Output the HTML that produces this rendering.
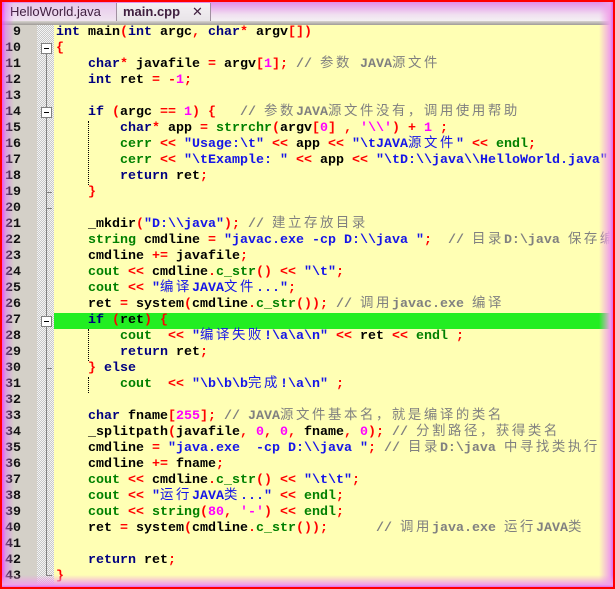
<!DOCTYPE html>
<html><head><meta charset="utf-8"><style>
*{margin:0;padding:0}
html,body{width:615px;height:589px;overflow:hidden;background:#ff0000}
#w{position:absolute;left:0;top:0;width:615px;height:589px;background:#ffffb4;overflow:hidden}
#tabs{position:absolute;left:0;top:0;width:615px;height:21px;background:linear-gradient(#e080e8,#f0e0f0 70%,#f4f0f4)}
#tabsep{position:absolute;left:0;top:21px;width:615px;height:4px;background:linear-gradient(#d8d4d0,#a09c98)}
.tab{position:absolute;top:3px;height:18px;font:13px "Liberation Sans",sans-serif;color:#402040;line-height:18px;border-right:1px solid #a090a0}
#gut{position:absolute;left:0;top:25px;width:37px;height:564px;background:#d4d0c8}
#chk{position:absolute;left:37px;top:25px;width:17px;height:564px;background-color:#f0f0f0;background-image:repeating-conic-gradient(#c8c8c8 0 25%,#f4f4f4 0 50%);background-size:2px 2px}
#lg{position:absolute;left:0;top:0;width:14px;height:589px;background:linear-gradient(90deg,#ff20ff,rgba(220,120,240,0.6) 40%,rgba(212,208,200,0))}
#rg{position:absolute;right:0;top:0;width:16px;height:589px;background:linear-gradient(90deg,rgba(255,255,180,0),#f0a0e8 70%,#d040f0)}
#bg{position:absolute;left:0;bottom:0;width:615px;height:14px;background:linear-gradient(rgba(255,255,180,0),#f0a0e8 70%,#d040f0)}
#hl{position:absolute;left:54px;top:313px;width:561px;height:16px;background:#22ee22}
.ln{position:absolute;left:0;width:21px;text-align:right;font:bold 13.33px "Liberation Mono",monospace;color:#101010;line-height:16px}
.l{position:absolute;left:56px;height:16px;white-space:pre;font:bold 13.33px "Liberation Mono",monospace;line-height:16px;color:#000}
.k{color:#000080}.o{color:#ff0000}.n{color:#ff00ff}.s{color:#1414e8}.c{color:#808080}.g{color:#008000}
i{font-style:normal;font-weight:normal;font-family:"WenQuanYi Zen Hei","Noto Sans CJK SC",sans-serif;letter-spacing:2.6px;font-size:13.4px;line-height:0}
.fb{position:absolute;left:41px;width:9px;height:9px;border:1px solid #808080;background:#fff}
.fb:after{content:"";position:absolute;left:2px;top:4px;width:5px;height:1px;background:#000}
.vl{position:absolute;left:46px;width:1px;background:#808080}
.tk{position:absolute;left:46px;width:6px;height:1px;background:#808080}
.dg{position:absolute;width:0;border-left:1px dotted #000}
#frame{position:absolute;left:0;top:0;width:611px;height:585px;border:2px solid #ff0000;pointer-events:none}
</style></head><body><div id="w">
<div id="tabs"></div>
<div class="tab" style="left:4px;width:107px;padding-left:6px;background:linear-gradient(#e8c8ec,#f0e4f0)">HelloWorld.java</div>
<div class="tab" style="left:116px;width:87px;padding-left:6px;background:linear-gradient(#f4f0f4,#e8e4e8);font-weight:bold;border-left:1px solid #a090a0">main.cpp<span style="position:absolute;left:75px;font-weight:normal">✕</span></div>
<div id="tabsep"></div>
<div id="gut"></div><div id="chk"></div>
<div id="hl"></div>
<div class="vl" style="top:50px;height:525px"></div>
<div class="fb" style="top:43px"></div>
<div class="fb" style="top:107px"></div>
<div class="fb" style="top:316px"></div>
<div class="tk" style="top:192px"></div>
<div class="tk" style="top:208px"></div>
<div class="tk" style="top:368px"></div>
<div class="tk" style="top:575px"></div>
<div class="dg" style="left:88px;top:121px;height:64px"></div>
<div class="dg" style="left:88px;top:329px;height:32px"></div>
<div class="dg" style="left:88px;top:377px;height:16px"></div>
<div class="ln" style="top:25px">9</div><div class="l" style="top:25px"><span class="k">int</span> main<span class="o">(</span><span class="k">int</span> argc<span class="o">,</span> <span class="k">char</span><span class="o">*</span> argv<span class="o">[])</span></div>
<div class="ln" style="top:41px">10</div><div class="l" style="top:41px"><span class="o">{</span></div>
<div class="ln" style="top:57px">11</div><div class="l" style="top:57px">    <span class="k">char</span><span class="o">*</span> javafile <span class="o">=</span> argv<span class="o">[</span><span class="n">1</span><span class="o">];</span> <span class="c">// <i>参数</i> JAVA<i>源文件</i></span></div>
<div class="ln" style="top:73px">12</div><div class="l" style="top:73px">    <span class="k">int</span> ret <span class="o">=</span> <span class="o">-</span><span class="n">1</span><span class="o">;</span></div>
<div class="ln" style="top:89px">13</div>
<div class="ln" style="top:105px">14</div><div class="l" style="top:105px">    <span class="k">if</span> <span class="o">(</span>argc <span class="o">==</span> <span class="n">1</span><span class="o">)</span> <span class="o">{</span>   <span class="c">// <i>参数</i>JAVA<i>源文件没有，调用使用帮助</i></span></div>
<div class="ln" style="top:121px">15</div><div class="l" style="top:121px">        <span class="k">char</span><span class="o">*</span> app <span class="o">=</span> <span class="g">strrchr</span><span class="o">(</span>argv<span class="o">[</span><span class="n">0</span><span class="o">]</span> <span class="o">,</span> <span class="n">'\\'</span><span class="o">)</span> <span class="o">+</span> <span class="n">1</span> <span class="o">;</span></div>
<div class="ln" style="top:137px">16</div><div class="l" style="top:137px">        <span class="g">cerr</span> <span class="o">&lt;&lt;</span> <span class="s">"Usage:\t"</span> <span class="o">&lt;&lt;</span> app <span class="o">&lt;&lt;</span> <span class="s">"\tJAVA<i>源文件</i>"</span> <span class="o">&lt;&lt;</span> <span class="g">endl</span><span class="o">;</span></div>
<div class="ln" style="top:153px">17</div><div class="l" style="top:153px">        <span class="g">cerr</span> <span class="o">&lt;&lt;</span> <span class="s">"\tExample: "</span> <span class="o">&lt;&lt;</span> app <span class="o">&lt;&lt;</span> <span class="s">"\tD:\\java\\HelloWorld.java"</span></div>
<div class="ln" style="top:169px">18</div><div class="l" style="top:169px">        <span class="k">return</span> ret<span class="o">;</span></div>
<div class="ln" style="top:185px">19</div><div class="l" style="top:185px">    <span class="o">}</span></div>
<div class="ln" style="top:201px">20</div>
<div class="ln" style="top:217px">21</div><div class="l" style="top:217px">    _mkdir<span class="o">(</span><span class="s">"D:\\java"</span><span class="o">);</span> <span class="c">// <i>建立存放目录</i></span></div>
<div class="ln" style="top:233px">22</div><div class="l" style="top:233px">    <span class="g">string</span> cmdline <span class="o">=</span> <span class="s">"javac.exe -cp D:\\java "</span><span class="o">;</span>  <span class="c">// <i>目录</i>D:\java <i>保存编</i></span></div>
<div class="ln" style="top:249px">23</div><div class="l" style="top:249px">    cmdline <span class="o">+=</span> javafile<span class="o">;</span></div>
<div class="ln" style="top:265px">24</div><div class="l" style="top:265px">    <span class="g">cout</span> <span class="o">&lt;&lt;</span> cmdline<span class="o">.</span><span class="g">c_str</span><span class="o">()</span> <span class="o">&lt;&lt;</span> <span class="s">"\t"</span><span class="o">;</span></div>
<div class="ln" style="top:281px">25</div><div class="l" style="top:281px">    <span class="g">cout</span> <span class="o">&lt;&lt;</span> <span class="s">"<i>编译</i>JAVA<i>文件</i>..."</span><span class="o">;</span></div>
<div class="ln" style="top:297px">26</div><div class="l" style="top:297px">    ret <span class="o">=</span> system<span class="o">(</span>cmdline<span class="o">.</span><span class="g">c_str</span><span class="o">());</span> <span class="c">// <i>调用</i>javac.exe <i>编译</i></span></div>
<div class="ln" style="top:313px">27</div><div class="l" style="top:313px">    <span class="k">if</span> <span class="o">(</span>ret<span class="o">)</span> <span class="o">{</span></div>
<div class="ln" style="top:329px">28</div><div class="l" style="top:329px">        <span class="g">cout</span>  <span class="o">&lt;&lt;</span> <span class="s">"<i>编译失败</i>!\a\a\n"</span> <span class="o">&lt;&lt;</span> ret <span class="o">&lt;&lt;</span> <span class="g">endl</span> <span class="o">;</span></div>
<div class="ln" style="top:345px">29</div><div class="l" style="top:345px">        <span class="k">return</span> ret<span class="o">;</span></div>
<div class="ln" style="top:361px">30</div><div class="l" style="top:361px">    <span class="o">}</span> <span class="k">else</span></div>
<div class="ln" style="top:377px">31</div><div class="l" style="top:377px">        <span class="g">cout</span>  <span class="o">&lt;&lt;</span> <span class="s">"\b\b\b<i>完成</i>!\a\n"</span> <span class="o">;</span></div>
<div class="ln" style="top:393px">32</div>
<div class="ln" style="top:409px">33</div><div class="l" style="top:409px">    <span class="k">char</span> fname<span class="o">[</span><span class="n">255</span><span class="o">];</span> <span class="c">// JAVA<i>源文件基本名，就是编译的类名</i></span></div>
<div class="ln" style="top:425px">34</div><div class="l" style="top:425px">    _splitpath<span class="o">(</span>javafile<span class="o">,</span> <span class="n">0</span><span class="o">,</span> <span class="n">0</span><span class="o">,</span> fname<span class="o">,</span> <span class="n">0</span><span class="o">);</span> <span class="c">// <i>分割路径，获得类名</i></span></div>
<div class="ln" style="top:441px">35</div><div class="l" style="top:441px">    cmdline <span class="o">=</span> <span class="s">"java.exe  -cp D:\\java "</span><span class="o">;</span> <span class="c">// <i>目录</i>D:\java <i>中寻找类执行</i></span></div>
<div class="ln" style="top:457px">36</div><div class="l" style="top:457px">    cmdline <span class="o">+=</span> fname<span class="o">;</span></div>
<div class="ln" style="top:473px">37</div><div class="l" style="top:473px">    <span class="g">cout</span> <span class="o">&lt;&lt;</span> cmdline<span class="o">.</span><span class="g">c_str</span><span class="o">()</span> <span class="o">&lt;&lt;</span> <span class="s">"\t\t"</span><span class="o">;</span></div>
<div class="ln" style="top:489px">38</div><div class="l" style="top:489px">    <span class="g">cout</span> <span class="o">&lt;&lt;</span> <span class="s">"<i>运行</i>JAVA<i>类</i>..."</span> <span class="o">&lt;&lt;</span> <span class="g">endl</span><span class="o">;</span></div>
<div class="ln" style="top:505px">39</div><div class="l" style="top:505px">    <span class="g">cout</span> <span class="o">&lt;&lt;</span> <span class="g">string</span><span class="o">(</span><span class="n">80</span><span class="o">,</span> <span class="n">'-'</span><span class="o">)</span> <span class="o">&lt;&lt;</span> <span class="g">endl</span><span class="o">;</span></div>
<div class="ln" style="top:521px">40</div><div class="l" style="top:521px">    ret <span class="o">=</span> system<span class="o">(</span>cmdline<span class="o">.</span><span class="g">c_str</span><span class="o">());</span>      <span class="c">// <i>调用</i>java.exe <i>运行</i>JAVA<i>类</i></span></div>
<div class="ln" style="top:537px">41</div>
<div class="ln" style="top:553px">42</div><div class="l" style="top:553px">    <span class="k">return</span> ret<span class="o">;</span></div>
<div class="ln" style="top:569px">43</div><div class="l" style="top:569px"><span class="o">}</span></div>
<div id="lg"></div><div id="rg"></div><div id="bg"></div>
<div id="frame"></div>
</div></body></html>
